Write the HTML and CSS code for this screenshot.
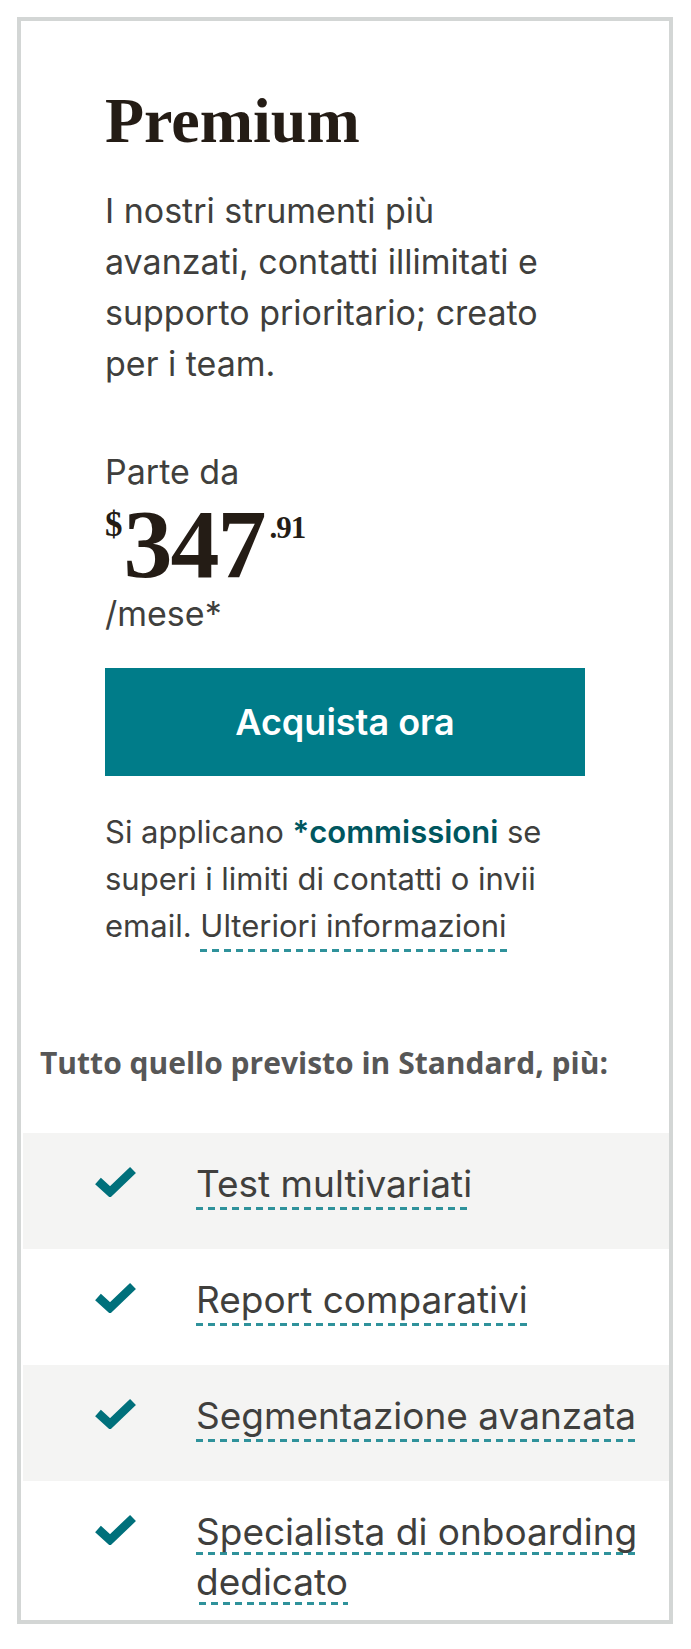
FILE: index.html
```html
<!DOCTYPE HTML>
<html lang="it">
<head>
  <title>Premium</title>
  <meta charset="utf-8">
  <meta name="viewport" content="width=device-width" />
  <link rel="stylesheet" href="styles.css">
</head>
<body>
  <div class="card">
    <div class="plan">
      <h1 class="plan-name">Premium</h1>
      <p class="plan-desc">I nostri strumenti più avanzati, contatti illimitati e supporto prioritario; creato per i team.</p>

      <p class="from">Parte da</p>
      <div class="price">
        <span class="currency">$</span>
        <span class="amount">347</span>
        <span class="cents">.91</span>
      </div>
      <p class="period">/mese*</p>

      <a class="buy" href="#">Acquista ora</a>

      <p class="fine">Si applicano <a class="fees" href="#">*commissioni</a> se superi i limiti di contatti o invii email. <span class="dashed">Ulteriori informazioni</span></p>
    </div>

    <p class="includes">Tutto quello previsto in Standard, più:</p>

    <ul class="features">
      <li>
        <svg class="check" width="41" height="31" viewBox="0 0 41 31"><polyline points="3,15 15,26 38,4" /></svg>
        <span class="dashed">Test multivariati</span>
      </li>
      <li>
        <svg class="check" width="41" height="31" viewBox="0 0 41 31"><polyline points="3,15 15,26 38,4" /></svg>
        <span class="dashed">Report comparativi</span>
      </li>
      <li>
        <svg class="check" width="41" height="31" viewBox="0 0 41 31"><polyline points="3,15 15,26 38,4" /></svg>
        <span class="dashed">Segmentazione avanzata</span>
      </li>
      <li>
        <svg class="check" width="41" height="31" viewBox="0 0 41 31"><polyline points="3,15 15,26 38,4" /></svg>
        <span class="feature-text"><span class="dashed">Specialista di onboarding dedicato</span></span>
      </li>
    </ul>
  </div>
</body>
</html>
```

FILE: styles.css
```css
html, body{
  margin: 0; padding: 0;
}
body{
 color: #403f3d;
 background-color: #fff;
 font-family: Inter, "Liberation Sans", sans-serif;
}
.card{
 margin: 17px 0 0 17px;
 width: 656px;
 border: 4px solid #d3d6d5;
 box-sizing: border-box;
 background: #fff;
}
.plan{
 padding: 68px 84px 0;
}
.plan-name{
 margin: 0;
 font-family: "Liberation Serif", serif;
 font-weight: bold;
 font-size: 64px;
 line-height: 1;
 color: #241c15;
}
.plan-desc{
 margin: 32px 0 0;
 max-width: 460px;
 font-size: 34px;
 line-height: 51px;
}
.from{
 margin: 57px 0 0;
 font-size: 34px;
 line-height: 51px;
}
.price{
 display: flex;
 align-items: flex-start;
 margin-top: 3px;
 font-family: "Liberation Serif", serif;
 font-weight: bold;
 color: #241c15;
}
.currency{
 font-size: 35px;
 line-height: 1;
 margin-top: 7px;
}
.amount{
 font-size: 98px;
 line-height: 88px;
 margin-left: 1px;
 letter-spacing: -2px;
}
.cents{
 font-size: 31px;
 line-height: 1;
 margin-top: 12px;
 margin-left: 5px;
 letter-spacing: -1px;
}
.period{
 margin: 0;
 font-size: 34px;
 line-height: 51px;
}
.buy{
 display: block;
 margin-top: 29px;
 height: 108px;
 line-height: 108px;
 background: #007c89;
 color: #fff;
 text-align: center;
 text-decoration: none;
 font-weight: 600;
 font-size: 36px;
}
.fine{
 margin: 32px 0 0;
 font-size: 31px;
 line-height: 47px;
}
.fees{
 color: #00575f;
 font-weight: 600;
 text-decoration: none;
}
.dashed{
 padding-bottom: 8px;
 background: linear-gradient(to right, #2f929b 60%, transparent 0) left bottom / 12px 3px repeat-x;
}
.includes{
 margin: 99px 0 0 19px;
 font-family: "Open Sans", sans-serif;
 font-weight: bold;
 font-size: 30px;
 line-height: 30px;
 color: #575757;
}
.features{
 list-style: none;
 margin: 55px 0 0 2px;
 padding: 0;
}
.features li{
 display: flex;
 align-items: flex-start;
 padding: 26px 0 39px 72px;
 font-size: 37px;
 line-height: 50px;
}
.features li:nth-child(odd){
 background: #f4f4f3;
}
.features li:last-child{
 padding-bottom: 13px;
}
.features .dashed{
 padding-bottom: 1px;
}
.check{
 flex: none;
 margin: 7px 60px 0 0;
}
.check polyline{
 fill: none;
 stroke: #00707b;
 stroke-width: 8.5;
}
```
